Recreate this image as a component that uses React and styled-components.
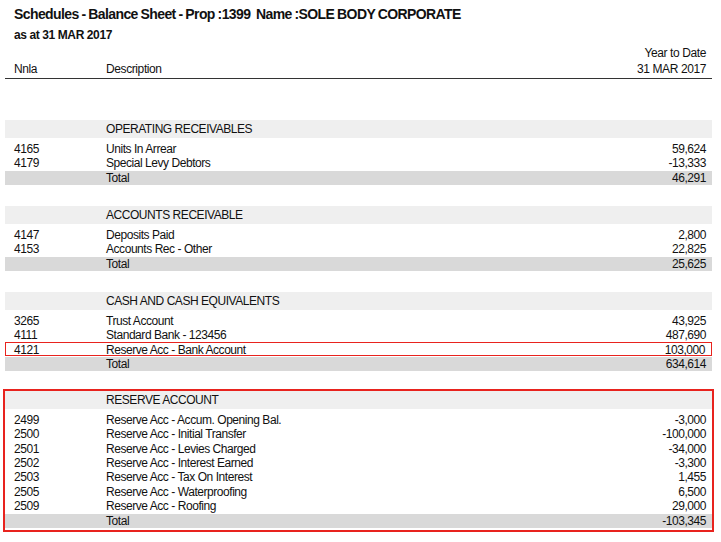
import React from "react";
import styled, { createGlobalStyle } from "styled-components";

const Global = createGlobalStyle`
  body { margin: 0; background: #fff; font-family: "Liberation Sans", Arial, sans-serif; color: #111; }
`;
const Page = styled.div`width: 721px; height: 542px; overflow: hidden; padding: 0 9px 0 5px; box-sizing: border-box;`;
const Title = styled.div`font-weight: bold; font-size: 14px; letter-spacing: -0.6px; word-spacing: -0.5px; height: 26px; line-height: 28px; padding-left: 9px;`;
const Sub = styled.div`font-weight: bold; font-size: 12px; letter-spacing: -0.4px; height: 18px; line-height: 18px; padding-left: 9px;`;
const Head = styled.div`display: grid; grid-template-columns: 92px 1fr 200px; align-items: end; border-bottom: 1px solid #333; padding: 0 0 1px 9px; font-size: 12px; letter-spacing: -0.4px; line-height: 16px; height: 33px;`;
const Right = styled.div`text-align: right; padding-right: 6px;`;
const Spacer = styled.div`height: ${p => p.h}px;`;
const Row = styled.div`
  display: grid; grid-template-columns: 92px 1fr 200px; align-items: center;
  font-size: 12px; letter-spacing: -0.45px; height: ${p => p.h || 14}px; line-height: 14px;
  background: ${p => p.bg || "transparent"};
  box-sizing: border-box; padding-left: ${p => p.red ? 8 : 9}px;
  border: ${p => p.red ? "1px solid #e8231e" : "none"};
  margin-top: ${p => p.mt || 0}px;
`;
const Box = styled.div`border: 2px solid #e8231e; padding: 0 0 2px; margin: 0 -2px;`;

const sections = [
  { title: "OPERATING RECEIVABLES", rows: [["4165","Units In Arrear","59,624"],["4179","Special Levy Debtors","-13,333"]], total: "46,291" },
  { title: "ACCOUNTS RECEIVABLE", rows: [["4147","Deposits Paid","2,800"],["4153","Accounts Rec - Other","22,825"]], total: "25,625" },
  { title: "CASH AND CASH EQUIVALENTS", rows: [["3265","Trust Account","43,925"],["4111","Standard Bank - 123456","487,690"],["4121","Reserve Acc - Bank Account","103,000",true]], total: "634,614" },
];
const reserve = { title: "RESERVE ACCOUNT", rows: [
  ["2499","Reserve Acc - Accum. Opening Bal.","-3,000"],["2500","Reserve Acc - Initial Transfer","-100,000"],
  ["2501","Reserve Acc - Levies Charged","-34,000"],["2502","Reserve Acc - Interest Earned","-3,300"],
  ["2503","Reserve Acc - Tax On Interest","1,455"],["2505","Reserve Acc - Waterproofing","6,500"],["2509","Reserve Acc - Roofing","29,000"]], total: "-103,345" };

function Section({ s, rowH = 14 }) {
  return (
    <>
      <Row h={18} bg="#efefef"><span /><span>{s.title}</span><span /></Row>
      <Spacer h={4} />
      {s.rows.map(r => (
        <Row key={r[0]} h={rowH} red={r[3]}><span>{r[0]}</span><span>{r[1]}</span><Right>{r[2]}</Right></Row>
      ))}
      <Row bg="#d9d9d9" h={14} mt={1}><span /><span>Total</span><Right>{s.total}</Right></Row>
    </>
  );
}

export default function App() {
  return (
    <Page>
      <Global />
      <Title>Schedules - Balance Sheet - Prop :1399&nbsp;&nbsp;Name :SOLE BODY CORPORATE</Title>
      <Sub>as at 31 MAR 2017</Sub>
      <Head>
        <span>Nnla</span><span>Description</span>
        <Right>Year to Date<br />31 MAR 2017</Right>
      </Head>
      <Spacer h={41} />
      <Section s={sections[0]} />
      <Spacer h={21} />
      <Section s={sections[1]} />
      <Spacer h={21} />
      <Section s={sections[2]} />
      <Spacer h={18} />
      <Box><Section s={reserve} rowH={14.3} /></Box>
    </Page>
  );
}
